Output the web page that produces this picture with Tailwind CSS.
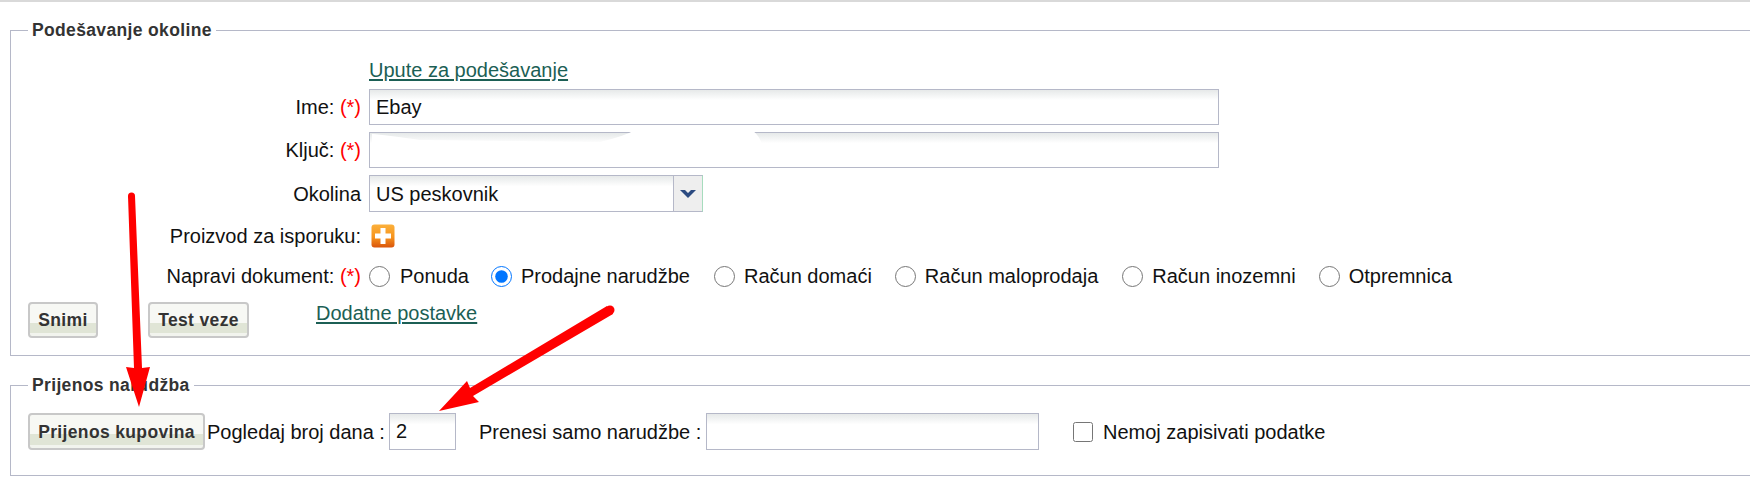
<!DOCTYPE html>
<html>
<head>
<meta charset="utf-8">
<script src="https://cdn.jsdelivr.net/npm/@tailwindcss/browser@4"></script>
</head>
<body class="bg-white">
<div class="relative w-[1750px] h-[494px] overflow-hidden bg-white font-['Liberation_Sans',Arial,sans-serif] text-[20px] leading-[24px] text-[#111] border-t-2 border-[#d9d9d9]">

  <fieldset class="ml-[10px] mt-[17px] w-[1760px] h-[337px] border border-[#b5b8c8]">
    <legend class="ml-[17px] px-[4px] text-[17.5px] leading-[22px] font-bold text-[#333] tracking-[0.35px]">Podešavanje okoline</legend>
    <div class="flex flex-col">
      <div class="h-[48px] pl-[358px] pt-[17px]">
        <a href="#" class="text-[#1c5f55] underline underline-offset-2 leading-[24px] block">Upute za podešavanje</a>
      </div>
      <div class="flex items-center gap-[8px] h-[36px]">
        <label class="w-[350px] text-right">Ime: <span class="text-[#f00]">(*)</span></label>
        <input type="text" value="Ebay" class="w-[850px] h-[36px] px-[6px] border border-[#b5b8c8] bg-[linear-gradient(#e6e9e9,#fff_30%)] outline-none">
      </div>
      <div class="flex items-center gap-[8px] h-[36px] mt-[7px]">
        <label class="w-[350px] text-right">Ključ: <span class="text-[#f00]">(*)</span></label>
        <input type="text" class="w-[850px] h-[36px] px-[6px] border border-[#b5b8c8] bg-[linear-gradient(#e6e9e9,#fff_30%)] outline-none">
      </div>
      <div class="flex items-center gap-[8px] h-[37px] mt-[7px]">
        <label class="w-[350px] text-right">Okolina</label>
        <div class="flex w-[334px] h-[37px] border border-[#b5b8c8] border-r-[#a6dcbd] bg-[linear-gradient(#e6e9e9,#fff_30%)]">
          <span class="flex-1 px-[6px] leading-[37px]">US peskovnik</span>
          <span class="flex items-center justify-center w-[29px] bg-[#eeeeee] border-l border-[#b5b8c8]">
            <svg width="18" height="10" viewBox="0 0 18 10"><path d="M1 1h5l3 3 3-3h5l-8 8z" fill="#2b4a80"/></svg>
          </span>
        </div>
      </div>
      <div class="flex items-center gap-[8px] h-[24px] mt-[12px]">
        <label class="w-[350px] text-right">Proizvod za isporuku:</label>
        <svg class="ml-[2px]" width="24" height="24" viewBox="0 0 24 24">
          <defs><linearGradient id="o" x1="0" y1="0" x2="0" y2="1"><stop offset="0" stop-color="#fbb03b"/><stop offset="0.55" stop-color="#f7941d"/><stop offset="1" stop-color="#d9540b"/></linearGradient></defs>
          <rect x="0.5" y="0.5" width="23" height="23" rx="3" fill="url(#o)"/>
          <path d="M9.5 4h5v5.5H20v5h-5.5V20h-5v-5.5H4v-5h5.5z" fill="#fff"/>
        </svg>
      </div>
      <div class="flex items-center gap-[8px] h-[24px] mt-[16px]">
        <label class="w-[350px] text-right">Napravi dokument: <span class="text-[#f00]">(*)</span></label>
        <div class="flex items-center">
          <input type="radio" name="d" class="w-[21px] h-[21px] m-0">
          <span class="ml-[10px] mr-[22px]">Ponuda</span>
          <input type="radio" name="d" checked class="w-[21px] h-[21px] m-0">
          <span class="ml-[9px] mr-[24px]">Prodajne narudžbe</span>
          <input type="radio" name="d" class="w-[21px] h-[21px] m-0">
          <span class="ml-[9px] mr-[23px]">Račun domaći</span>
          <input type="radio" name="d" class="w-[21px] h-[21px] m-0">
          <span class="ml-[9px] mr-[24px]">Račun maloprodaja</span>
          <input type="radio" name="d" class="w-[21px] h-[21px] m-0">
          <span class="ml-[9px] mr-[23px]">Račun inozemni</span>
          <input type="radio" name="d" class="w-[21px] h-[21px] m-0">
          <span class="ml-[9px]">Otpremnica</span>
        </div>
      </div>
      <div class="flex items-start h-[36px] mt-[14px] pl-[17px]">
        <button class="w-[70px] h-[36px] rounded-[4px] border-2 border-[#c8c8c8] bg-[linear-gradient(#f7f8f4_58%,#e0e5d6_58%,#e0e5d6_90%,#f2f4ee_90%)] text-[17.5px] font-bold text-[#333] tracking-[0.35px]">Snimi</button>
        <button class="ml-[50px] w-[101px] h-[36px] rounded-[4px] border-2 border-[#c8c8c8] bg-[linear-gradient(#f7f8f4_58%,#e0e5d6_58%,#e0e5d6_90%,#f2f4ee_90%)] text-[17.5px] font-bold text-[#333] tracking-[0.35px]">Test veze</button>
        <a href="#" class="ml-[67px] -mt-[1px] text-[#1c5f55] underline underline-offset-2">Dodatne postavke</a>
      </div>
    </div>
  </fieldset>

  <fieldset class="ml-[10px] mt-[18px] w-[1760px] h-[102px] border border-[#b5b8c8]">
    <legend class="ml-[17px] px-[4px] text-[17.5px] leading-[22px] font-bold text-[#333] tracking-[0.35px]">Prijenos narudžba</legend>
    <div class="flex items-center h-[37px] mt-[17px] pl-[17px]">
      <button class="w-[177px] h-[37px] rounded-[4px] border-2 border-[#c8c8c8] bg-[linear-gradient(#f7f8f4_58%,#e0e5d6_58%,#e0e5d6_90%,#f2f4ee_90%)] text-[17.5px] font-bold text-[#333] tracking-[0.35px]">Prijenos kupovina</button>
      <span class="ml-[2px] w-[182px]">Pogledaj broj dana :</span>
      <input type="text" value="2" class="w-[67px] h-[37px] px-[6px] border border-[#b5b8c8] bg-[linear-gradient(#e6e9e9,#fff_30%)] outline-none">
      <span class="ml-[23px] w-[227px]">Prenesi samo narudžbe :</span>
      <input type="text" class="w-[333px] h-[37px] px-[6px] border border-[#b5b8c8] bg-[linear-gradient(#e6e9e9,#fff_30%)] outline-none">
      <input type="checkbox" class="ml-[34px] w-[20px] h-[20px] m-0">
      <span class="ml-[10px]">Nemoj zapisivati podatke</span>
    </div>
  </fieldset>

  <svg class="absolute left-0 top-[-2px] pointer-events-none" width="1750" height="494" viewBox="0 0 1750 494">
    <path d="M372 134 Q 385 135 420 140 L 600 142 Q 625 136 635 130 L 752 130 Q 760 136 762 145 L 760 166 L 372 166 Z" fill="#fff"/>
    <circle cx="131.5" cy="196" r="3.5" fill="#f00"/>
    <polygon points="128,196 135,196 142,368 150,367 139,407 126,367 134,368" fill="#f00"/>
    <circle cx="610" cy="310" r="4.5" fill="#f00"/>
    <polygon points="607,306 613,314 473,396 479,402 439,411 467,381 470,388" fill="#f00"/>
  </svg>
</div>
</body>
</html>
